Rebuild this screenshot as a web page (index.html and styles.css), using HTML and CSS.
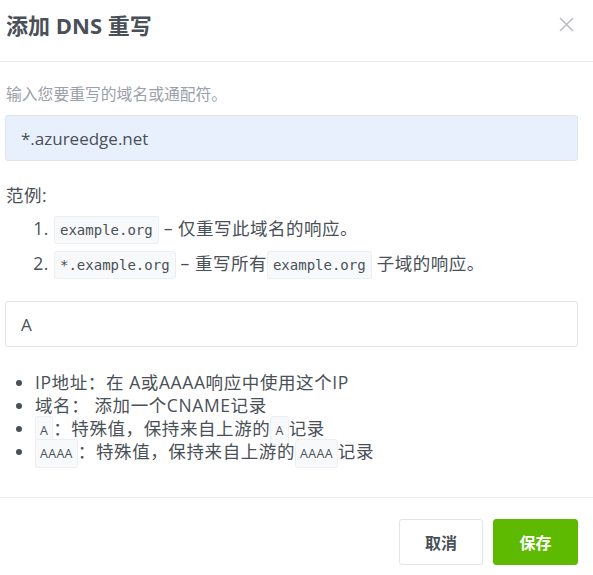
FILE: index.html
```html
<!DOCTYPE html>
<html lang="zh">
<head>
<meta charset="utf-8">
<link rel="stylesheet" href="styles.css">
</head>
<body>
<div class="modal">
  <div class="modal-header">
    <h4 class="modal-title">添加 DNS 重写</h4>
    <button class="close" aria-label="关闭">
      <svg width="15" height="15" viewBox="0 0 15 15"><path d="M1 1L14 14M14 1L1 14" stroke="#b9bcc2" stroke-width="1.5" fill="none"/></svg>
    </button>
  </div>
  <div class="modal-body">
    <div class="hint">输入您要重写的域名或通配符。</div>
    <input class="form-control filled" type="text" value="*.azureedge.net">
    <div class="examples">
      <div class="examples-title">范例:</div>
      <ol class="examples-list">
        <li><code>example.org</code> – 仅重写此域名的响应。</li>
        <li><code>*.example.org</code> – 重写所有<code>example.org</code> 子域的响应。</li>
      </ol>
    </div>
    <input class="form-control answer-input" type="text" value="A">
    <ul class="answers">
      <li>IP地址：在 A或AAAA响应中使用这个IP</li>
      <li>域名： 添加一个CNAME记录</li>
      <li><code class="sm">A</code>：特殊值，保持来自上游的<code class="sm">A</code>记录</li>
      <li><code class="sm">AAAA</code>：特殊值，保持来自上游的<code class="sm">AAAA</code>记录</li>
    </ul>
  </div>
  <div class="modal-footer">
    <button class="btn btn-secondary">取消</button>
    <button class="btn btn-success">保存</button>
  </div>
</div>
</body>
</html>
```

FILE: styles.css
```css
html, body {
  margin: 0;
  padding: 0;
  background: #fff;
}
body {
  font-family: "Open Sans", "Noto Sans CJK SC", sans-serif;
  color: #495057;
  font-size: 17.5px;
}
.modal {
  width: 593px;
}
.modal-header {
  height: 62px;
  box-sizing: border-box;
  border-bottom: 1px solid #e9ecef;
  display: flex;
  align-items: flex-start;
  justify-content: space-between;
  padding: 9px 19px 0 6px;
}
.modal-title {
  margin: 0;
  font-size: 22px;
  font-weight: 700;
  line-height: 32px;
  color: #495057;
}
.close {
  border: 0;
  background: none;
  padding: 0;
  margin-top: 8px;
  width: 15px;
  height: 15px;
  display: flex;
}
.modal-body {
  padding: 20px 15px 34px 5px;
  border-bottom: 1px solid #e9ecef;
}
.hint {
  font-size: 15.8px;
  color: #9aa0ac;
  line-height: 24px;
  margin-left: 1px;
}
.form-control {
  display: block;
  box-sizing: border-box;
  width: 573px;
  height: 46px;
  border: 1px solid #e0e5ec;
  border-radius: 3px;
  padding: 0 15px;
  font-family: "Open Sans", "Noto Sans CJK SC", sans-serif;
  font-size: 17px;
  color: #495057;
  background: #fff;
  margin: 0;
}
.form-control.filled {
  margin-top: 9px;
  background: #e8f0fe;
}
.examples {
  margin: 22px 0 0 1px;
  line-height: 24px;
  letter-spacing: 0.5px;
}
.examples-list {
  margin: 4px 0 0;
  padding-left: 48px;
}
.examples-list li {
  line-height: 35px;
}
code {
  font-family: "DejaVu Sans Mono", monospace;
  font-size: 14px;
  line-height: 1;
  letter-spacing: 0;
  background: #f8f9fa;
  border: 1px solid #eceef1;
  border-radius: 3px;
  padding: 5px 5px;
  color: #495057;
}
.answer-input {
  margin-top: 20px;
}
.answers {
  margin: 24px 0 0;
  padding-left: 30px;
  line-height: 23px;
  letter-spacing: 0.6px;
}
code.sm {
  font-family: "Open Sans", sans-serif;
  font-size: 12.5px;
  letter-spacing: 0.3px;
  padding: 5px 4px;
}
.modal-footer {
  display: flex;
  justify-content: flex-end;
  gap: 10px;
  padding: 21px 15px 10px 0;
}
.btn {
  height: 46px;
  border-radius: 3px;
  font-family: "Open Sans", "Noto Sans CJK SC", sans-serif;
  font-size: 16px;
  font-weight: 700;
  padding: 0;
}
.btn-secondary {
  width: 84px;
  background: #fff;
  border: 1px solid #e0e5ec;
  color: #495057;
}
.btn-success {
  width: 85px;
  background: #5eba00;
  border: 1px solid #5eba00;
  color: #fff;
}
```
